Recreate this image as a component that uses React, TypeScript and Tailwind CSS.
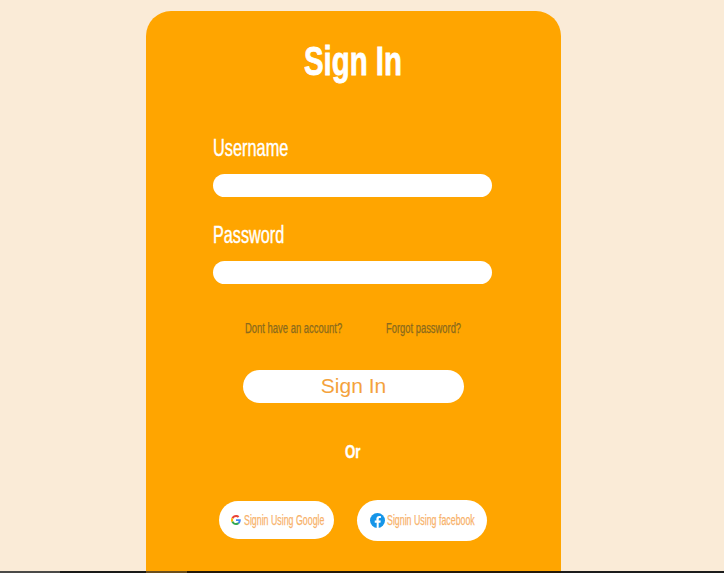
const sans = "font-['Liberation_Sans',sans-serif]";
const squeezed = "block whitespace-nowrap origin-left";

function GoogleIcon() {
  return (
    <svg width="10" height="10" viewBox="0 0 48 48" className="shrink-0">
      <path fill="#EA4335" d="M24 9.500c3.500 0 6.700 1.200 9.200 3.600l6.900-6.900C35.900 2.400 30.400 0 24 0 14.600 0 6.600 5.400 2.600 13.200l8 6.200C12.500 13.700 17.800 9.500 24 9.500z" />
      <path fill="#4285F4" d="M46.900 24.500c0-1.600-.1-3.100-.4-4.500H24v9h12.900c-.6 3-2.200 5.500-4.700 7.200l7.700 6c4.500-4.200 7-10.300 7-17.700z" />
      <path fill="#FBBC05" d="M10.500 28.600c-.5-1.400-.8-3-.8-4.600s.3-3.200.8-4.600l-8-6.200C.9 16.500 0 20.100 0 24s.9 7.500 2.600 10.800l7.900-6.200z" />
      <path fill="#34A853" d="M24 48c6.500 0 11.900-2.100 15.900-5.800l-7.700-6c-2.200 1.400-4.900 2.300-8.200 2.300-6.200 0-11.500-4.200-13.400-9.900l-8 6.200C6.600 42.600 14.600 48 24 48z" />
    </svg>
  );
}

function FacebookIcon() {
  return (
    <svg width="15" height="15" viewBox="0 0 24 24" className="shrink-0">
      <circle cx="12" cy="12" r="12" fill="#1595e8" />
      <path fill="#fff" d="M16.700 15.500l.5-3.500h-3.300V9.800c0-1 .5-1.900 2-1.900h1.500v-3s-1.400-.2-2.700-.2c-2.700 0-4.500 1.600-4.500 4.600V12H7.600v3.500h3.100V24h3.200v-8.500h2.800z" />
    </svg>
  );
}

export default function App() {
  return (
    <div className={`h-[573px] overflow-hidden bg-[#faebd7] flex flex-col ${sans}`}>
      <main className="flex-1 min-h-0 flex justify-center pt-[11px] pr-[17px]">
        <section className="w-[415px] rounded-t-[25px] bg-[#ffa500] flex flex-col items-center">
          <h1 className="mt-[25px] h-[50px] w-[98px] -translate-x-[1px] leading-[50px] text-[40px] font-bold text-white [-webkit-text-stroke:0.8px_#fff]">
            <span className={`${squeezed} scale-x-[.735]`}>Sign In</span>
          </h1>
          <form className="mt-[47px] ml-[67px] self-start w-[279px] flex flex-col">
            <label className="h-[30px] leading-[30px] text-[23px] text-white [-webkit-text-stroke:0.4px_#fff]">
              <span className={`${squeezed} scale-x-[.71]`}>Username</span>
            </label>
            <input className="mt-[11px] h-[23px] w-full rounded-full bg-white outline-none" />
            <label className="mt-[23px] h-[30px] leading-[30px] text-[23px] text-white [-webkit-text-stroke:0.4px_#fff]">
              <span className={`${squeezed} scale-x-[.705]`}>Password</span>
            </label>
            <input className="mt-[11px] h-[23px] w-full rounded-full bg-white outline-none" />
          </form>
          <div className="mt-[35px] h-[18px] w-full pl-[99px] flex items-center text-[14px] text-[#8a6a1e] [-webkit-text-stroke:0.25px_#8a6a1e]">
            <a className="block w-[141px]">
              <span className={`${squeezed} scale-x-[.675]`}>Dont have an account?</span>
            </a>
            <a className="block">
              <span className={`${squeezed} scale-x-[.67]`}>Forgot password?</span>
            </a>
          </div>
          <button className="mt-[33px] h-[33px] w-[221px] pb-[2px] rounded-full bg-white text-[21px] leading-none text-[#f4a23c]">
            Sign In
          </button>
          <p className="mt-[38px] h-[22px] w-[15px] -translate-x-[1px] leading-[22px] text-[19px] font-bold text-white [-webkit-text-stroke:0.4px_#fff]">
            <span className={`${squeezed} scale-x-[.7]`}>Or</span>
          </p>
          <div className="mt-[37px] w-full pl-[73px] flex items-start">
            <button className="mt-[1px] h-[38px] w-[115px] pl-[12px] rounded-full bg-white flex items-center gap-[3px] text-[14px] text-[#f8b26a] [-webkit-text-stroke:0.25px_#f8b26a]">
              <GoogleIcon />
              <span className={`${squeezed} w-[80px] scale-x-[.63]`}>Signin Using Google</span>
            </button>
            <button className="ml-[23px] h-[41px] w-[130px] pl-[13px] rounded-full bg-white flex items-center gap-[2px] text-[14px] text-[#f8b26a] [-webkit-text-stroke:0.25px_#f8b26a]">
              <FacebookIcon />
              <span className={`${squeezed} w-[89px] scale-x-[.63]`}>Signin Using facebook</span>
            </button>
          </div>
        </section>
      </main>
      <footer className="h-[2px] shrink-0 flex bg-[#1c1c1c]">
        <div className="w-[60px] bg-[#4a4a48]" />
        <div className="w-[86px] bg-[#1a1a18]" />
        <div className="w-[41px] bg-[#6b4e1c]" />
        <div className="w-[374px] bg-[#241808]" />
      </footer>
    </div>
  );
}
